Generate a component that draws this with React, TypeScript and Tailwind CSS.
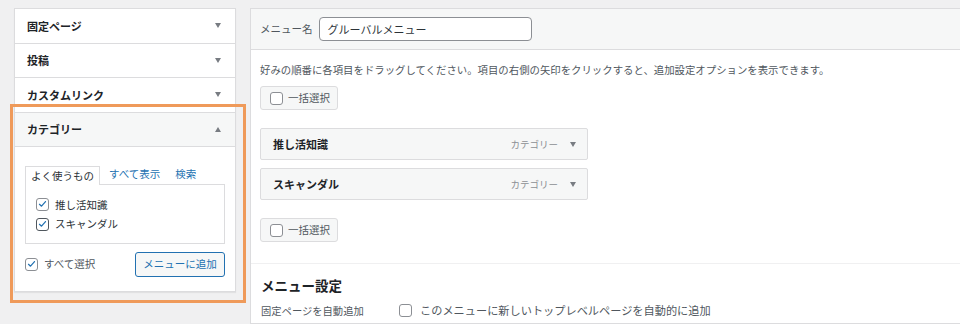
import React from 'react'

const font = { fontFamily: '"Noto Sans CJK JP", "Noto Sans", sans-serif' }

function Caret({ up = false }: { up?: boolean }) {
  return (
    <span
      className={
        up
          ? 'inline-block h-0 w-0 border-x-[3.5px] border-b-[5px] border-x-transparent border-b-[#787c82]'
          : 'inline-block h-0 w-0 border-x-[3.5px] border-t-[5px] border-x-transparent border-t-[#787c82]'
      }
    />
  )
}

function Check({ checked = false, dark = false }: { checked?: boolean; dark?: boolean }) {
  return (
    <span
      className={`flex h-[13px] w-[13px] shrink-0 items-center justify-center rounded-[3px] border bg-white ${
        dark ? 'border-[#50575e]' : 'border-[#8c8f94]'
      }`}
    >
      {checked && (
        <svg viewBox="0 0 20 20" className="h-[12px] w-[12px]">
          <path d="M4.5 10.5 L8.2 14 L15.5 5.5" fill="none" stroke="#2271b1" strokeWidth="2.2" strokeLinecap="round" strokeLinejoin="round" />
        </svg>
      )}
    </span>
  )
}

function SectionRow({ label }: { label: string }) {
  return (
    <div className="flex h-[34.5px] items-center justify-between border-b border-[#dcdcde] pl-[12px] pr-[14px]">
      <span className="text-[11px] font-bold text-[#1d2327]">{label}</span>
      <Caret />
    </div>
  )
}

function BulkButton() {
  return (
    <div className="flex h-[24px] w-[78px] items-center gap-[5px] rounded-[3px] border border-[#dcdcde] bg-[#f6f7f7] pl-[9px]">
      <Check />
      <span className="text-[10.5px] text-[#50575e]">一括選択</span>
    </div>
  )
}

function MenuItem({ label }: { label: string }) {
  return (
    <div className="flex h-[32px] w-[328px] items-center justify-between rounded-[2px] border border-[#dcdcde] bg-[#f6f7f7] pl-[12px] pr-[11px]">
      <span className="text-[11px] font-bold text-[#1d2327]">{label}</span>
      <div className="flex items-center gap-[12px]">
        <span className="text-[9.5px] text-[#8c8f94]">カテゴリー</span>
        <Caret />
      </div>
    </div>
  )
}

export default function App() {
  return (
    <div className="relative flex h-[324px] w-[960px] overflow-hidden bg-[#f0f0f1] pl-[14px] pt-[8px]" style={font}>
      {/* left: add menu items */}
      <div className="flex w-[222px] shrink-0 flex-col self-start border border-[#dcdcde] bg-white shadow-[0_1px_1px_rgba(0,0,0,0.06)]">
        <SectionRow label="固定ページ" />
        <SectionRow label="投稿" />
        <SectionRow label="カスタムリンク" />
        <div className="flex h-[34px] items-center justify-between border-b border-[#dcdcde] bg-[#f6f7f7] pl-[12px] pr-[14px]">
          <span className="text-[11px] font-bold text-[#1d2327]">カテゴリー</span>
          <Caret up />
        </div>
        <div className="px-[10px] pb-[14px] pt-[19px]">
          <div className="flex items-end text-[10.5px]">
            <div className="-mb-px flex h-[19px] items-center border border-b-0 border-[#dcdcde] bg-white px-[5px] text-[#2c3338]">
              よく使うもの
            </div>
            <span className="ml-[9px] pb-[2px] text-[#2271b1]">すべて表示</span>
            <span className="ml-[15px] pb-[2px] text-[#2271b1]">検索</span>
          </div>
          <div className="flex h-[60px] flex-col gap-[4px] border border-[#dcdcde] pl-[10px] pt-[12px]">
            <label className="flex items-center gap-[6px] text-[10.5px] text-[#2c3338]">
              <Check checked />
              推し活知識
            </label>
            <label className="flex items-center gap-[6px] text-[10.5px] text-[#2c3338]">
              <Check checked dark />
              スキャンダル
            </label>
          </div>
          <div className="mt-[8px] flex items-center justify-between">
            <label className="flex items-center gap-[6px] text-[10.5px] text-[#50575e]">
              <Check checked />
              すべて選択
            </label>
            <div className="flex h-[25px] w-[90px] items-center justify-center rounded-[3px] border border-[#2271b1] bg-[#f6f7f7] text-[10.5px] text-[#2271b1]">
              メニューに追加
            </div>
          </div>
        </div>
      </div>

      {/* orange annotation */}
      <div className="pointer-events-none absolute left-[10px] top-[104px] h-[199px] w-[236px] border-[3px] border-[#ef9a5a]" />

      {/* right: menu structure */}
      <div className="ml-[14px] flex-1 border border-r-0 border-[#dcdcde] bg-white">
        <div className="flex h-[41px] items-center gap-[6px] border-b border-[#dcdcde] bg-[#f6f7f7] pl-[9px]">
          <span className="text-[10.5px] text-[#50575e]">メニュー名</span>
          <div className="flex h-[24px] w-[213px] items-center rounded-[4px] border border-[#8c8f94] bg-white px-[8px] text-[11px] text-[#2c3338]">
            グルーバルメニュー
          </div>
        </div>
        <div className="pl-[9px]">
          <p className="mt-[13px] text-[10.4px] leading-[14px] text-[#50575e]">
            好みの順番に各項目をドラッグしてください。項目の右側の矢印をクリックすると、追加設定オプションを表示できます。
          </p>
          <div className="mt-[9px]">
            <BulkButton />
          </div>
          <div className="mt-[18px] flex flex-col gap-[8px]">
            <MenuItem label="推し活知識" />
            <MenuItem label="スキャンダル" />
          </div>
          <div className="mt-[18px]">
            <BulkButton />
          </div>
        </div>
        <div className="mt-[21px] border-t border-[#f0f0f1] pl-[10px]">
          <h3 className="mt-[11px] text-[13.5px] font-bold leading-[20px] text-[#1d2327]">メニュー設定</h3>
          <div className="mt-[7px] flex items-center">
            <span className="w-[138px] text-[10.3px] text-[#50575e]">固定ページを自動追加</span>
            <Check />
            <span className="ml-[8px] text-[11.2px] text-[#50575e]">このメニューに新しいトップレベルページを自動的に追加</span>
          </div>
        </div>
      </div>
    </div>
  )
}
